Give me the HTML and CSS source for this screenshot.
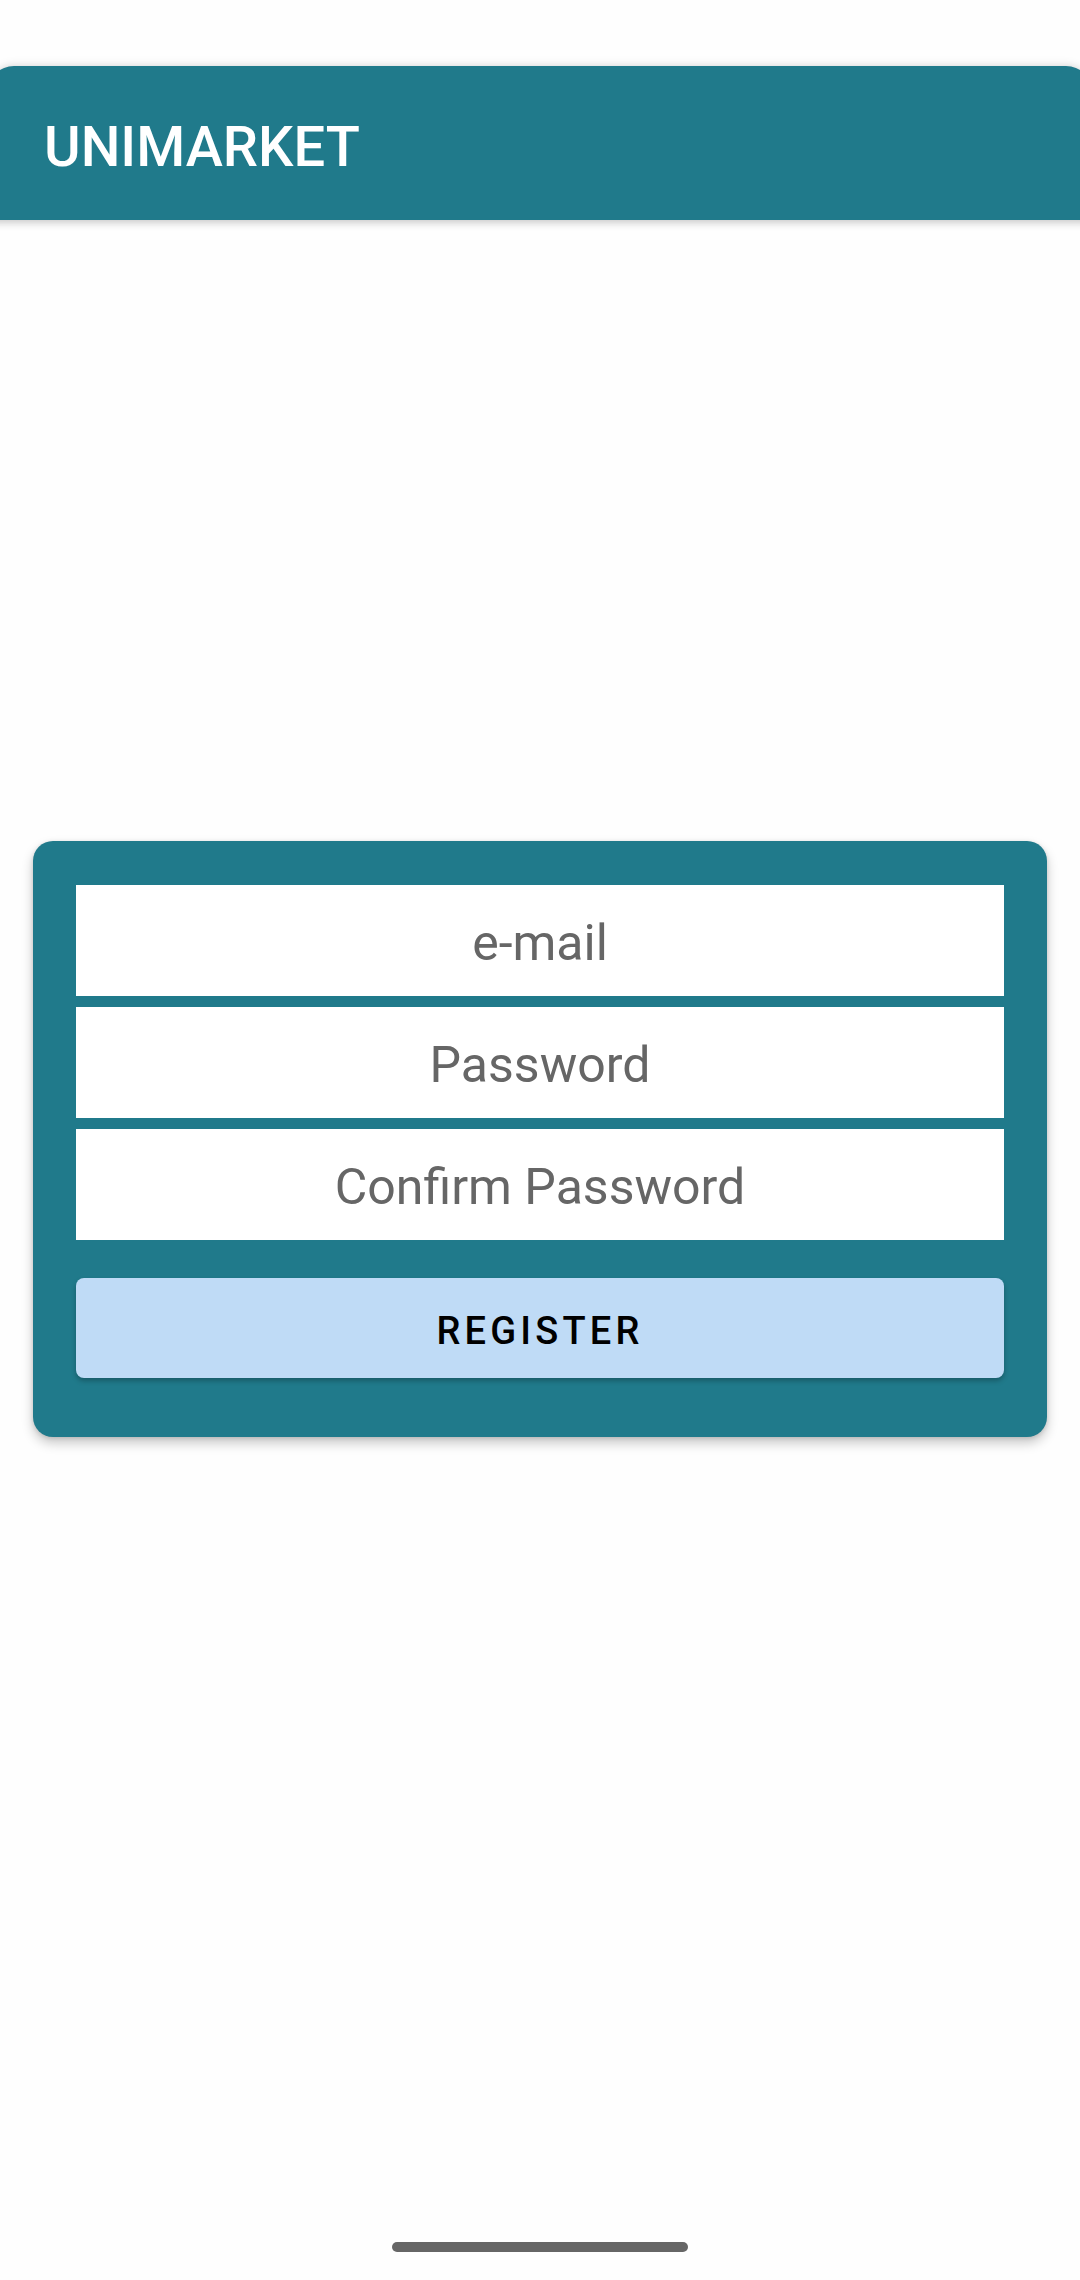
FILE: index.html
```html
<!DOCTYPE html>
<html>
<head>
<meta charset="utf-8">
<link rel="stylesheet" href="styles.css">
</head>
<body>
<div class="screen">
  <div class="status"></div>
  <header class="appbar"><span class="title">UNIMARKET</span></header>
  <main class="content">
    <section class="card">
      <div class="field">e-mail</div>
      <div class="field">Password</div>
      <div class="field">Confirm Password</div>
      <div class="button">REGISTER</div>
    </section>
  </main>
  <div class="navbar"><div class="handle"></div></div>
</div>
</body>
</html>
```
FILE: styles.css
```css
html, body {
  margin: 0;
  padding: 0;
  background: #fefefe;
}
.screen {
  width: 1080px;
  height: 2280px;
  display: flex;
  flex-direction: column;
  overflow: hidden;
  font-family: Roboto, "Noto Sans", sans-serif;
}
.status {
  height: 66px;
  flex: none;
}
.appbar {
  flex: none;
  height: 154px;
  box-sizing: border-box;
  margin: 0 -12px;
  padding: 7px 0 0 56px;
  display: flex;
  align-items: center;
  background: #207a8b;
  border-radius: 26px 26px 0 0;
  box-shadow: 0 3px 8px rgba(0,0,0,0.18), 0 -2px 10px rgba(0,0,0,0.08);
}
.title {
  color: #ffffff;
  font-size: 56px;
  font-weight: 500;
}
.content {
  flex: none;
  padding: 621px 33px 0;
}
.card {
  background: #207a8b;
  border-radius: 20px;
  padding: 44px 43px 59px;
  display: flex;
  flex-direction: column;
  gap: 11px;
  box-shadow: 0 6px 12px rgba(0,0,0,0.22), 0 1px 4px rgba(0,0,0,0.12);
}
.field {
  height: 111px;
  box-sizing: border-box;
  padding-top: 5px;
  background: #ffffff;
  display: flex;
  align-items: center;
  justify-content: center;
  color: #666666;
  font-size: 50px;
}
.button {
  margin-top: 27px;
  height: 100px;
  box-sizing: border-box;
  padding-top: 5px;
  background: #bfdbf6;
  border-radius: 8px;
  display: flex;
  align-items: center;
  justify-content: center;
  color: #000000;
  font-size: 38px;
  font-weight: 500;
  letter-spacing: 0.11em;
  box-shadow: 0 3px 5px rgba(0,0,0,0.25);
}
.navbar {
  margin-top: auto;
  height: 38px;
  flex: none;
  display: flex;
  justify-content: center;
}
.handle {
  width: 296px;
  height: 10px;
  border-radius: 5px;
  background: #666666;
}
```
